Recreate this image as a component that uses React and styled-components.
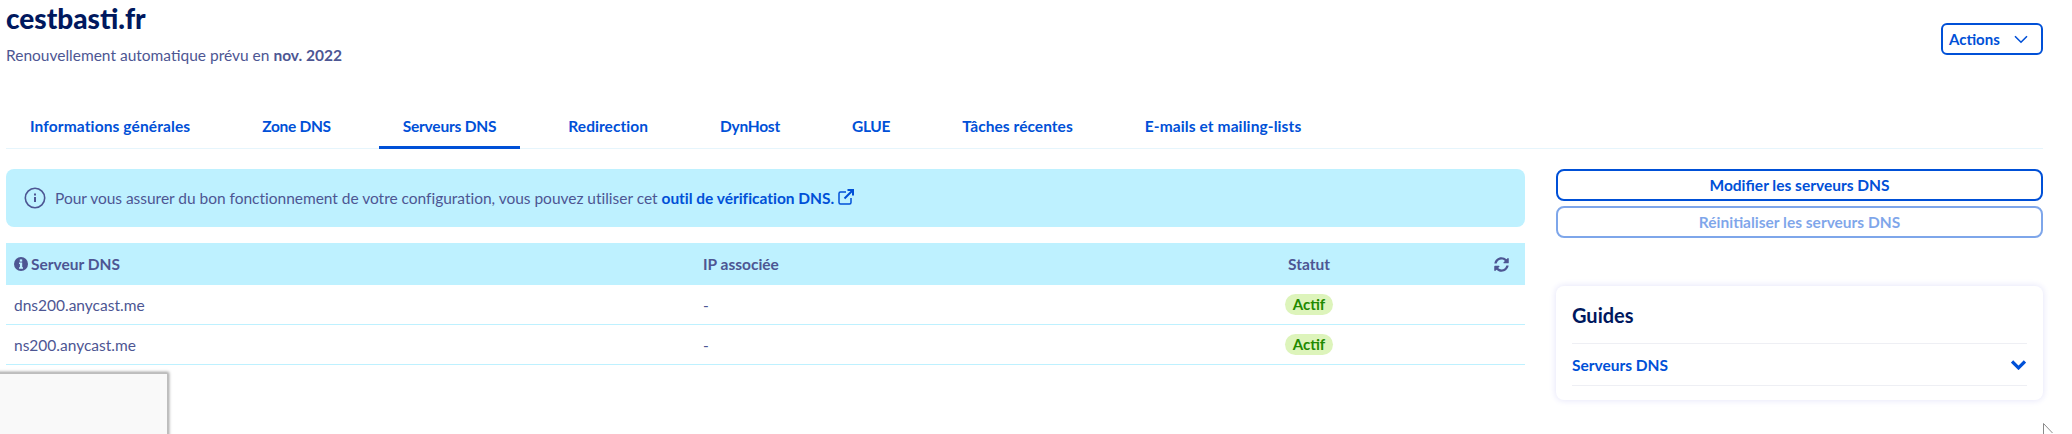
import React from 'react';
import styled, { createGlobalStyle } from 'styled-components';

const Global = createGlobalStyle`
  html, body { margin: 0; padding: 0; background: #fff; }
  body {
    font-family: "Lato", "Noto Sans", sans-serif;
    font-size: 15.5px;
    color: #4d5693;
    height: 434px;
    overflow: hidden;
  }
`
const blue = '#0050d7';
const pale = '#bef1ff';

const Page = styled.div`
  position: relative;
  height: 434px;
  overflow: hidden;
  padding: 0 29px 0 6px;
  box-sizing: border-box;
`
const Header = styled.header`
  display: flex;
  justify-content: space-between;
  align-items: flex-start;
  height: 88px;
`
const Title = styled.h1`
  margin: 0;
  font-size: 28px;
  line-height: 36px;
  font-weight: 900;
  color: #00185e;
`
const Renewal = styled.p`
  margin: 9px 0 0;
  line-height: 20px;
  font-size: 15.5px;
  b { font-weight: 700; }
`
const ActionsButton = styled.button`
  display: flex;
  align-items: center;
  gap: 14px;
  width: 102px;
  height: 32px;
  margin: 23px 0 0;
  padding: 0 0 0 6px;
  box-sizing: border-box;
  background: #fff;
  border: 2px solid ${blue};
  border-radius: 6px;
  color: ${blue};
  font: 700 15px "Lato", sans-serif;
`
const Tabs = styled.nav`
  display: flex;
  gap: 24px;
  height: 61px;
  box-sizing: border-box;
  border-bottom: 1px solid #e6f5fc;
`
const Tab = styled.a`
  padding: 0 24px;
  height: 61px;
  box-sizing: border-box;
  line-height: 76px;
  font-size: 15.5px;
  font-weight: 700;
  letter-spacing: ${p => p.$spacing}px;
  color: ${blue};
  border-bottom: ${p => (p.$active ? `3px solid ${blue}` : 'none')};
`
const Body = styled.div`
  display: grid;
  grid-template-columns: 1519px 487px;
  column-gap: 31px;
  padding-top: 20px;
`
const Banner = styled.div`
  display: flex;
  align-items: center;
  gap: 9px;
  height: 58px;
  padding-left: 18px;
  box-sizing: border-box;
  background: ${pale};
  border-radius: 8px;
  letter-spacing: -0.02px;
  a { color: ${blue}; font-weight: 700; }
  a svg { margin-left: 4px; vertical-align: -1px; }
`
const Table = styled.div`
  margin-top: 16px;
`
const Row = styled.div`
  display: grid;
  grid-template-columns: 689px 585px 1fr 31px;
  align-items: center;
  height: ${p => (p.$head ? '42px' : '40px')};
  padding-left: 8px;
  box-sizing: border-box;
  background: ${p => (p.$head ? pale : '#fff')};
  font-weight: ${p => (p.$head ? 700 : 400)};
  border-bottom: ${p => (p.$head ? 'none' : `1px solid ${pale}`)};
`
const NameHead = styled.span`
  display: flex;
  align-items: center;
  gap: 3px;
`
const Badge = styled.span`
  display: inline-block;
  width: 48px;
  height: 21px;
  line-height: 21px;
  margin-left: -3px;
  text-align: center;
  border-radius: 11px;
  background: #ddf4bb;
  color: #1f8a00;
  font-weight: 700;
  font-size: 15px;
`
const Side = styled.aside`
  display: flex;
  flex-direction: column;
`
const SideButton = styled.button`
  height: 32px;
  margin-bottom: 5px;
  background: #fff;
  border: 2px solid ${blue};
  border-radius: 8px;
  color: ${blue};
  font: 700 15.5px "Lato", sans-serif;
  opacity: ${p => (p.disabled ? 0.5 : 1)};
`
const Card = styled.section`
  margin-top: 43px;
  height: 114px;
  padding: 0 16px;
  box-sizing: border-box;
  background: #fff;
  border-radius: 8px;
  box-shadow: 0 0 6px 1px #e8e8fa;
`
const CardTitle = styled.h2`
  margin: 0;
  height: 57px;
  line-height: 58px;
  font-size: 20px;
  font-weight: 700;
  color: #00185e;
  border-bottom: 1px solid #eeeff4;
`
const Guide = styled.div`
  display: flex;
  align-items: center;
  justify-content: space-between;
  height: 41px;
  padding-right: 1px;
  border-bottom: 1px solid #eeeff4;
  color: ${blue};
  font-weight: 700;
`
const Overlay = styled.div`
  position: absolute;
  left: -4px;
  top: 373px;
  width: 170px;
  height: 80px;
  background: #f9f9f9;
  border: 1px solid #bdbdbd;
  box-shadow: 1px -1px 3px rgba(0, 0, 0, 0.4);
`
const Cursor = styled.svg`
  position: absolute;
  left: 2043px;
  top: 423px;
`

const InfoRing = () => (
  <svg width="22" height="22" viewBox="0 0 22 22" fill="none" stroke="#4d5693">
    <circle cx="11" cy="11" r="9.7" strokeWidth="1.6" />
    <path d="M11 10v5" strokeWidth="2" />
    <path d="M11 6.6v1.8" strokeWidth="2" />
  </svg>
);
const External = () => (
  <svg width="16" height="16" viewBox="0 0 16 16" fill="none" stroke={blue} strokeWidth="1.5">
    <path d="M8 3H2.5A1.5 1.5 0 0 0 1 4.5v9A1.5 1.5 0 0 0 2.5 15h9a1.5 1.5 0 0 0 1.5-1.5V9" />
    <path d="M6.5 9.5 14.5 1.5M9.5 1h5.5v5.5" strokeWidth="2" />
  </svg>
);
const InfoSolid = () => (
  <svg width="14" height="14" viewBox="0 0 14 14">
    <circle cx="7" cy="7" r="7" fill="#4d5693" />
    <rect x="5.8" y="2.4" width="2.4" height="2.2" fill={pale} />
    <path d="M5 5.6h3.2v4.7H9v1.4H5v-1.4h.9V7H5z" fill={pale} />
  </svg>
);
const Refresh = () => (
  <svg width="15" height="15" viewBox="0 0 512 512" fill="#4d5693">
    <path d="M370.7 133.3C339.5 104 298.9 88 255.8 88c-77.5.1-144.3 53.2-162.8 126.9-1.3 5.4-6.1 9.2-11.7 9.2H24.1c-7.5 0-13.2-6.8-11.8-14.2C33.9 94.9 134.8 8 256 8c66.4 0 126.8 26.1 171.3 68.7L463 41c15.1-15.1 41-4.4 41 17V192c0 13.3-10.7 24-24 24H345.9c-21.4 0-32.1-25.9-17-41l41.8-41.7zM32 296h134.1c21.4 0 32.1 25.9 17 41l-41.8 41.8c31.3 29.3 71.8 45.3 114.9 45.2 77.4-.1 144.3-53.1 162.8-126.8 1.3-5.4 6.1-9.2 11.7-9.2h57.3c7.5 0 13.2 6.8 11.8 14.2C478.1 417.1 377.2 504 256 504c-66.4 0-126.8-26.1-171.3-68.7L49 471c-15.1 15.1-41 4.4-41-17V320c0-13.3 10.7-24 24-24z" />
  </svg>
);
const Chevron = ({ width, height, stroke }) => (
  <svg width={width} height={height} viewBox="0 0 14 9" fill="none" stroke={blue} strokeWidth={stroke}>
    <path d="M1 1.2 7 7.2 13 1.2" />
  </svg>
);

// Lato runs a little wider or narrower than the original face, tab by tab
const tabs = [
  { label: 'Informations générales', spacing: 0.12 },
  { label: 'Zone DNS', spacing: -0.32 },
  { label: 'Serveurs DNS', spacing: -0.2 },
  { label: 'Redirection', spacing: 0.05 },
  { label: 'DynHost', spacing: -0.25 },
  { label: 'GLUE', spacing: -0.3 },
  { label: 'Tâches récentes', spacing: 0.05 },
  { label: 'E-mails et mailing-lists', spacing: 0.1 },
];
const servers = ['dns200.anycast.me', 'ns200.anycast.me'];

export default function App() {
  return (
    <Page>
      <Global />
      <Header>
        <div>
          <Title>cestbasti.fr</Title>
          <Renewal>Renouvellement automatique prévu en <b>nov. 2022</b></Renewal>
        </div>
        <ActionsButton>Actions <Chevron width={14} height={9} stroke={1.6} /></ActionsButton>
      </Header>
      <Tabs>
        {tabs.map(t => (
          <Tab key={t.label} $spacing={t.spacing} $active={t.label === 'Serveurs DNS'}>{t.label}</Tab>
        ))}
      </Tabs>
      <Body>
        <main>
          <Banner>
            <InfoRing />
            <span>
              Pour vous assurer du bon fonctionnement de votre configuration, vous pouvez utiliser cet{' '}
              <a>outil de vérification DNS.<External /></a>
            </span>
          </Banner>
          <Table>
            <Row $head>
              <NameHead><InfoSolid />Serveur DNS</NameHead>
              <span>IP associée</span>
              <span>Statut</span>
              <Refresh />
            </Row>
            {servers.map(s => (
              <Row key={s}>
                <span>{s}</span>
                <span>-</span>
                <span><Badge>Actif</Badge></span>
                <span />
              </Row>
            ))}
          </Table>
        </main>
        <Side>
          <SideButton>Modifier les serveurs DNS</SideButton>
          <SideButton disabled>Réinitialiser les serveurs DNS</SideButton>
          <Card>
            <CardTitle>Guides</CardTitle>
            <Guide>Serveurs DNS <Chevron width={15} height={10} stroke={3} /></Guide>
          </Card>
        </Side>
      </Body>
      <Overlay />
      <Cursor width="10" height="11" viewBox="0 0 10 11" fill="#fff" stroke="#8a8a8a">
        <path d="M.5.5v10.5M.5.5 9.5 10" />
      </Cursor>
    </Page>
  );
}
